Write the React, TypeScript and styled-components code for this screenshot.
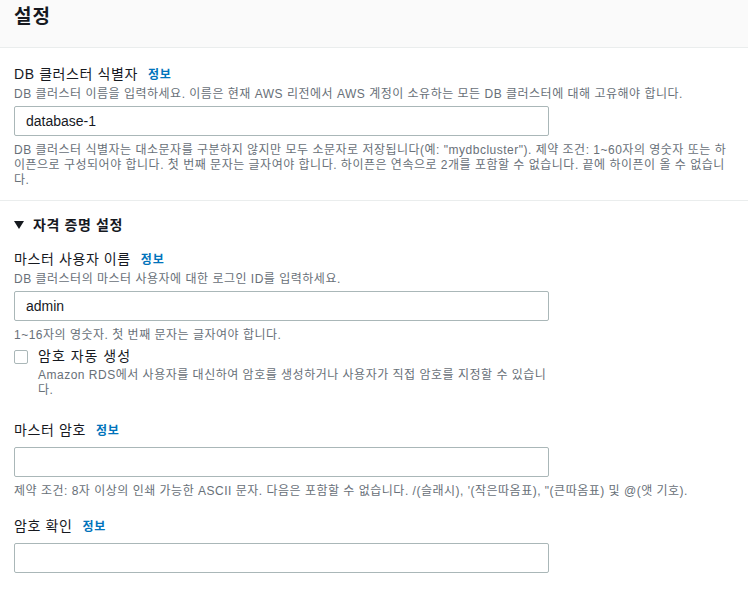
import styled, { createGlobalStyle } from "styled-components";

const GlobalStyle = createGlobalStyle`
  body {
    margin: 0;
    background: #ffffff;
    font-family: "Liberation Sans", "Noto Sans CJK KR", sans-serif;
    color: #16191f;
  }
`;

const Panel = styled.div`
  width: 748px;
  background: #ffffff;
`;

const Header = styled.div`
  height: 48px;
  box-sizing: border-box;
  background: #fafafa;
  border-bottom: 1px solid #eaeded;
  padding: 3px 14px 0;
`;

const Title = styled.h2`
  margin: 0;
  font-size: 19px;
  line-height: 28px;
  letter-spacing: 1px;
  font-weight: 700;
  color: #16191f;
`;

const Section = styled.div<{ $divided?: boolean }>`
  padding: ${({ $divided }) => ($divided ? "0 14px 12px" : "0 14px")};
  border-bottom: ${({ $divided }) => ($divided ? "1px solid #eaeded" : "none")};
`;

const Field = styled.div<{ $top: number }>`
  display: flex;
  flex-direction: column;
  margin-top: ${({ $top }) => `${$top}px`};
`;

const LabelRow = styled.div<{ $bare?: boolean }>`
  display: flex;
  align-items: baseline;
  gap: 10px;
  font-size: 14px;
  line-height: 20px;
  letter-spacing: 0.6px;
  color: #16191f;
  margin-bottom: ${({ $bare }) => ($bare ? "2px" : "0")};
`;

const Info = styled.a`
  font-size: 12px;
  font-weight: 700;
  letter-spacing: 0.8px;
  color: #0073bb;
  text-decoration: none;
`;

const Desc = styled.div<{ $top?: number }>`
  font-size: 12px;
  line-height: 15px;
  letter-spacing: 0.5px;
  color: #687078;
  margin-top: ${({ $top }) => `${$top ?? 2}px`};
`;

const Input = styled.input`
  box-sizing: border-box;
  width: 535px;
  height: 30px;
  margin-top: 4px;
  padding: 0 11px;
  border: 1px solid #aab7b8;
  border-radius: 2px;
  font-family: inherit;
  font-size: 14px;
  color: #16191f;
  background: #ffffff;
  outline: none;
`;

const Hint = styled.div<{ $width?: number }>`
  font-size: 12px;
  line-height: 15px;
  letter-spacing: 0.5px;
  color: #687078;
  margin-top: 7px;
  max-width: ${({ $width }) => ($width ? `${$width}px` : "none")};
`;

const Expander = styled.div`
  display: flex;
  align-items: center;
  gap: 9px;
  margin-top: 14px;
  font-size: 14px;
  font-weight: 700;
  line-height: 20px;
  letter-spacing: 0.6px;
`;

const Caret = styled.span`
  width: 0;
  height: 0;
  border-left: 5px solid transparent;
  border-right: 5px solid transparent;
  border-top: 8px solid #16191f;
`;

const CheckRow = styled.div`
  display: flex;
  align-items: flex-start;
  gap: 10px;
  margin-top: 4px;
`;

const Box = styled.span`
  flex: none;
  width: 14px;
  height: 14px;
  margin-top: 3px;
  border: 1px solid #aab7b8;
  border-radius: 2px;
  box-sizing: border-box;
`;

const CheckText = styled.div`
  display: flex;
  flex-direction: column;
  max-width: 512px;
`;

const CheckLabel = styled.div`
  font-size: 14px;
  line-height: 19px;
  letter-spacing: 1px;
`;

export default function App() {
  return (
    <>
      <GlobalStyle />
      <Panel>
        <Header>
          <Title>설정</Title>
        </Header>
        <Section $divided>
          <Field $top={16}>
            <LabelRow>
              DB 클러스터 식별자<Info>정보</Info>
            </LabelRow>
            <Desc>
              DB 클러스터 이름을 입력하세요. 이름은 현재 AWS 리전에서 AWS 계정이 소유하는 모든 DB 클러스터에 대해 고유해야 합니다.
            </Desc>
            <Input defaultValue="database-1" />
            <Hint $width={716}>
              DB 클러스터 식별자는 대소문자를 구분하지 않지만 모두 소문자로 저장됩니다(예: "mydbcluster"). 제약 조건: 1~60자의 영숫자 또는 하이픈으로 구성되어야 합니다. 첫 번째 문자는 글자여야 합니다. 하이픈은 연속으로 2개를 포함할 수 없습니다. 끝에 하이픈이 올 수 없습니다.
            </Hint>
          </Field>
        </Section>
        <Section>
          <Expander>
            <Caret />
            자격 증명 설정
          </Expander>
          <Field $top={14}>
            <LabelRow>
              마스터 사용자 이름<Info>정보</Info>
            </LabelRow>
            <Desc>DB 클러스터의 마스터 사용자에 대한 로그인 ID를 입력하세요.</Desc>
            <Input defaultValue="admin" />
            <Hint>1~16자의 영숫자. 첫 번째 문자는 글자여야 합니다.</Hint>
          </Field>
          <CheckRow>
            <Box />
            <CheckText>
              <CheckLabel>암호 자동 생성</CheckLabel>
              <Desc $top={2}>
                Amazon RDS에서 사용자를 대신하여 암호를 생성하거나 사용자가 직접 암호를 지정할 수 있습니다.
              </Desc>
            </CheckText>
          </CheckRow>
          <Field $top={22}>
            <LabelRow $bare>
              마스터 암호<Info>정보</Info>
            </LabelRow>
            <Input type="password" />
            <Hint>
              제약 조건: 8자 이상의 인쇄 가능한 ASCII 문자. 다음은 포함할 수 없습니다. /(슬래시), '(작은따옴표), "(큰따옴표) 및 @(앳 기호).
            </Hint>
          </Field>
          <Field $top={17}>
            <LabelRow $bare>
              암호 확인<Info>정보</Info>
            </LabelRow>
            <Input type="password" />
          </Field>
        </Section>
      </Panel>
    </>
  );
}
